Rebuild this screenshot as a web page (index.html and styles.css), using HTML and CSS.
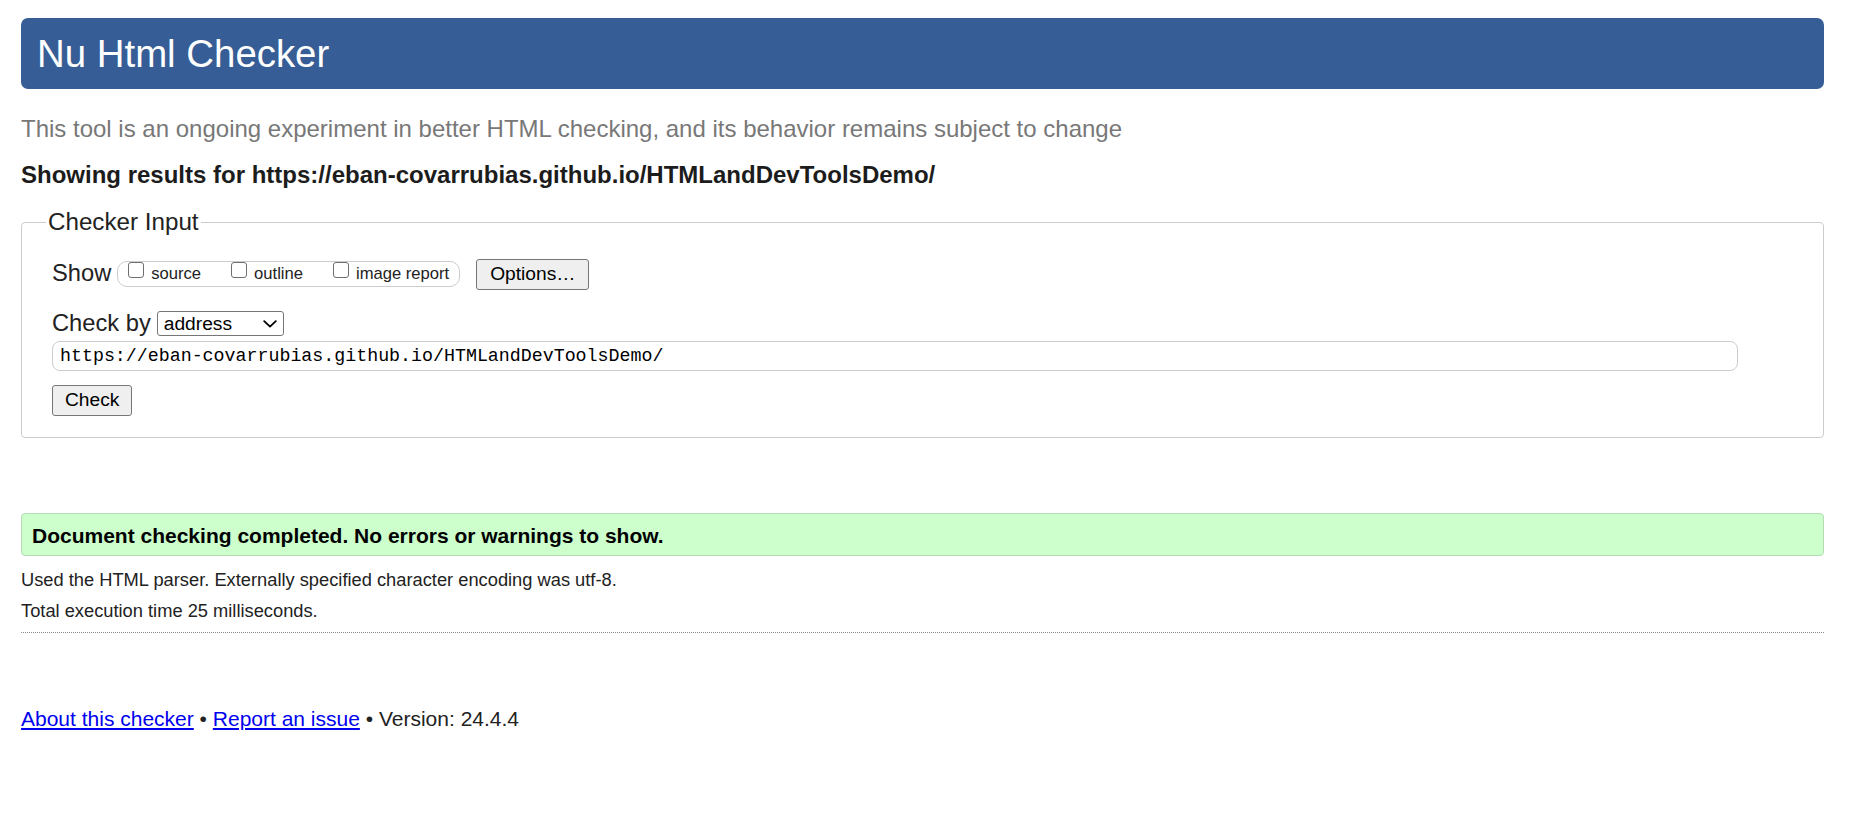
FILE: index.html
```html
<!DOCTYPE html>
<html lang="en">
<head>
<meta charset="utf-8">
<title>Nu Html Checker</title>
<link rel="stylesheet" href="styles.css">
</head>
<body>
<h1 class="title">Nu Html Checker</h1>
<p class="intro">This tool is an ongoing experiment in better HTML checking, and its behavior remains subject to change</p>
<p class="showing">Showing results for https://eban-covarrubias.github.io/HTMLandDevToolsDemo/</p>
<form class="checker">
  <fieldset class="checker-fieldset">
    <legend class="checker-legend">Checker Input</legend>
    <div class="row row-show">
      <span class="row-label label-show">Show</span>
      <span class="opts">
        <label class="opt"><input type="checkbox" class="cb"><span class="opt-text">source</span></label>
        <label class="opt"><input type="checkbox" class="cb"><span class="opt-text">outline</span></label>
        <label class="opt"><input type="checkbox" class="cb"><span class="opt-text">image report</span></label>
      </span>
      <button type="button" class="btn btn-options">Options…</button>
    </div>
    <div class="row row-checkby">
      <span class="row-label">Check by</span>
      <span class="select-wrap">
        <select class="select"><option>address</option></select>
        <svg class="chevron" width="14" height="8" viewBox="0 0 14 8" aria-hidden="true"><path d="M1.2 1.2 L7 6.6 L12.8 1.2" fill="none" stroke="#000" stroke-width="1.8" stroke-linecap="round" stroke-linejoin="round"/></svg>
      </span>
    </div>
    <div class="row row-url">
      <input type="url" class="url" value="https://eban-covarrubias.github.io/HTMLandDevToolsDemo/">
    </div>
    <div class="row row-submit">
      <button type="button" class="btn btn-check">Check</button>
    </div>
  </fieldset>
</form>
<p class="success">Document checking completed. No errors or warnings to show.</p>
<p class="details details-first">Used the HTML parser. Externally specified character encoding was utf-8.</p>
<p class="details">Total execution time 25 milliseconds.</p>
<hr class="rule">
<p class="footer"><a class="footer-link" href="#">About this checker</a> • <a class="footer-link" href="#">Report an issue</a> • Version: 24.4.4</p>
</body>
</html>
```

FILE: styles.css
```css
* {
  box-sizing: border-box;
}

html,
body {
  margin: 0;
}

body {
  padding: 18px 39px 40px 21px;
  font-family: "Liberation Sans", Arial, sans-serif;
  color: #222;
  background: #fff;
}

.title {
  margin: 0;
  padding: 14px 14px 13px 16px;
  background: #365d95;
  color: #fff;
  font-weight: normal;
  font-size: 38.4px;
  line-height: 44px;
  border-radius: 7px;
}

.intro {
  margin: 26px 0 0;
  font-size: 24px;
  line-height: 28px;
  color: #787878;
}

.showing {
  margin: 18px 0 0;
  font-size: 24px;
  line-height: 28px;
  font-weight: bold;
  color: #1c1c1c;
}

.checker {
  margin: 20px 0 0;
}

.checker-fieldset {
  margin: 0;
  min-width: 0;
  padding: 23px 30px 21px 30px;
  border: 1px solid #ccc;
  border-radius: 4px;
}

.checker-legend {
  margin-left: -6px;
  padding: 0 2px;
  font-size: 24.2px;
  line-height: 26.8px;
  color: #222;
}

.row {
  display: flex;
  align-items: flex-start;
}

.row-label {
  font-size: 23.7px;
  line-height: 26.8px;
  color: #222;
}

.label-show {
  margin-top: 1px;
}

.opts {
  display: flex;
  align-items: flex-start;
  height: 26px;
  margin: 2px 0 0 6px;
  padding: 0 10px;
  border: 1px solid #ccc;
  border-radius: 10px;
}

.opt {
  display: flex;
  align-items: flex-start;
  margin-right: 30px;
}

.opt:last-child {
  margin-right: 0;
}

.cb {
  appearance: none;
  -webkit-appearance: none;
  width: 16px;
  height: 16px;
  margin: 0 7px 0 0;
  border: 1.5px solid #6f6f6f;
  border-radius: 3px;
  background: #fff;
}

.opt-text {
  margin-top: 2px;
  font-size: 16.6px;
  line-height: 19px;
  color: #222;
}

.btn {
  height: 31px;
  margin: 0;
  border: 1px solid #767676;
  border-radius: 3px;
  background: #efefef;
  color: #000;
  font-family: "Liberation Sans", Arial, sans-serif;
  font-size: 19.2px;
  line-height: 22px;
}

.btn-options {
  margin-left: 16px;
  padding: 0 13px;
}

.btn-check {
  padding: 0 12px;
}

.row-checkby {
  margin-top: 20px;
}

.select-wrap {
  position: relative;
  display: block;
  margin: 1.5px 0 0 6px;
}

.select {
  appearance: none;
  -webkit-appearance: none;
  display: block;
  width: 127px;
  height: 25px;
  margin: 0;
  padding: 0 0 0 6px;
  border: 1px solid #767676;
  border-radius: 3px;
  background: #fff;
  color: #000;
  font-family: "Liberation Sans", Arial, sans-serif;
  font-size: 19.2px;
  line-height: 23px;
}

.chevron {
  position: absolute;
  right: 7px;
  top: 9px;
  pointer-events: none;
}

.row-url {
  margin-top: 4px;
}

.url {
  width: 1686px;
  height: 30px;
  margin: 0;
  padding: 0 7px;
  border: 1px solid #ccc;
  border-radius: 8px;
  background: #fff;
  color: #000;
  font-family: "Liberation Mono", "DejaVu Sans Mono", monospace;
  font-size: 18.3px;
}

.row-submit {
  margin-top: 14px;
}

.success {
  margin: 75.5px 0 0;
  padding: 9.5px 9px 7.5px 10px;
  border: 1px solid #b5dbb5;
  border-radius: 4px;
  background: #ccffcc;
  color: #000;
  font-size: 21px;
  line-height: 24px;
  font-weight: bold;
}

.details {
  margin: 10px 0 0;
  font-size: 18.3px;
  line-height: 21px;
  color: #222;
}

.details-first {
  margin-top: 12.5px;
}

.rule {
  height: 0;
  margin: 11.5px 0 0;
  border: 0;
  border-top: 1px dotted #8a8a8a;
}

.footer {
  margin: 74px 0 0;
  font-size: 21px;
  line-height: 24px;
  color: #222;
}

.footer-link {
  color: #0000ee;
  text-decoration: underline;
}
```
